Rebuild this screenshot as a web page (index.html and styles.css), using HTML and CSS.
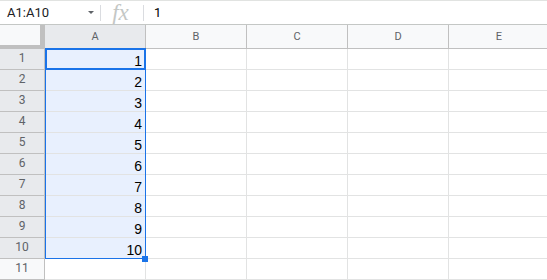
FILE: index.html
```html
<!DOCTYPE html>
<html lang="en">
<head>
<meta charset="UTF-8">
<meta name="viewport" content="width=device-width, initial-scale=1.0">
<title>Sheet</title>
<link rel="stylesheet" href="styles.css">
</head>
<body>
<div class="formula-bar">
    <div class="name-box">
        <span class="range-name">A1:A10</span>
        <span class="caret"></span>
    </div>
    <div class="fx-box"><span class="fx">fx</span></div>
    <div class="formula-input">1</div>
</div>

<div class="sheet">
    <div class="grid">
        <div class="corner"></div>
        <div class="col-head selected">A</div>
        <div class="col-head">B</div>
        <div class="col-head">C</div>
        <div class="col-head">D</div>
        <div class="col-head">E</div>

        <div class="row-head selected">1</div><div class="cell in-range">1</div><div class="cell"></div><div class="cell"></div><div class="cell"></div><div class="cell"></div>
        <div class="row-head selected">2</div><div class="cell in-range">2</div><div class="cell"></div><div class="cell"></div><div class="cell"></div><div class="cell"></div>
        <div class="row-head selected">3</div><div class="cell in-range">3</div><div class="cell"></div><div class="cell"></div><div class="cell"></div><div class="cell"></div>
        <div class="row-head selected">4</div><div class="cell in-range">4</div><div class="cell"></div><div class="cell"></div><div class="cell"></div><div class="cell"></div>
        <div class="row-head selected">5</div><div class="cell in-range">5</div><div class="cell"></div><div class="cell"></div><div class="cell"></div><div class="cell"></div>
        <div class="row-head selected">6</div><div class="cell in-range">6</div><div class="cell"></div><div class="cell"></div><div class="cell"></div><div class="cell"></div>
        <div class="row-head selected">7</div><div class="cell in-range">7</div><div class="cell"></div><div class="cell"></div><div class="cell"></div><div class="cell"></div>
        <div class="row-head selected">8</div><div class="cell in-range">8</div><div class="cell"></div><div class="cell"></div><div class="cell"></div><div class="cell"></div>
        <div class="row-head selected">9</div><div class="cell in-range">9</div><div class="cell"></div><div class="cell"></div><div class="cell"></div><div class="cell"></div>
        <div class="row-head selected">10</div><div class="cell in-range">10</div><div class="cell"></div><div class="cell"></div><div class="cell"></div><div class="cell"></div>
        <div class="row-head">11</div><div class="cell"></div><div class="cell"></div><div class="cell"></div><div class="cell"></div><div class="cell"></div>
    </div>

    <div class="range-border"></div>
    <div class="active-cell"></div>
    <div class="fill-handle"></div>
</div>
</body>
</html>
```

FILE: styles.css
```css
body {
    margin: 0;
    width: 547px;
    height: 280px;
    overflow: hidden;
    background-color: #fff;
    font-family: Roboto, "Liberation Sans", Arial, sans-serif;
}

.formula-bar {
    display: flex;
    align-items: center;
    height: 23px;
    border-top: 1px solid #e1e3e1;
    border-bottom: 1px solid #c4c7c5;
    background-color: #fff;
}

.name-box {
    display: flex;
    align-items: center;
    justify-content: space-between;
    box-sizing: border-box;
    width: 101px;
    height: 16px;
    padding: 0 6px 0 7px;
    border-right: 1px solid #dadce0;
}

.range-name {
    font-size: 13px;
    color: #202124;
}

.caret {
    width: 0;
    height: 0;
    border-left: 3px solid transparent;
    border-right: 3px solid transparent;
    border-top: 3px solid #5f6368;
}

.fx-box {
    display: flex;
    align-items: center;
    justify-content: center;
    box-sizing: border-box;
    width: 43px;
    height: 16px;
    border-right: 1px solid #dadce0;
}

.fx {
    font-family: "Liberation Serif", "Times New Roman", serif;
    font-style: italic;
    font-size: 23px;
    color: #c4c7c5;
    line-height: 16px;
    padding-right: 3px;
}

.formula-input {
    padding-left: 10px;
    font-size: 13px;
    color: #000;
}

.sheet {
    position: relative;
}

.grid {
    display: grid;
    grid-template-columns: 45px repeat(5, 101px);
    grid-template-rows: 24px repeat(11, 21px);
}

.corner {
    box-sizing: border-box;
    background-color: #f8f9fa;
    border-right: 5px solid #c0c0c0;
    border-bottom: 4px solid #c0c0c0;
}

.col-head {
    display: flex;
    align-items: center;
    justify-content: center;
    box-sizing: border-box;
    background-color: #f8f9fa;
    border-right: 1px solid #c0c0c0;
    border-bottom: 1px solid #c0c0c0;
    font-size: 11px;
    color: #5f6368;
}

.row-head {
    display: flex;
    align-items: center;
    justify-content: center;
    box-sizing: border-box;
    background-color: #f8f9fa;
    border-right: 1px solid #c0c0c0;
    border-bottom: 1px solid #c0c0c0;
    font-size: 12px;
    color: #5f6368;
    padding-bottom: 2px;
}

.col-head.selected,
.row-head.selected {
    background-color: #e8eaed;
}

.cell {
    display: flex;
    align-items: flex-end;
    justify-content: flex-end;
    box-sizing: border-box;
    padding-right: 3px;
    border-right: 1px solid #e2e3e3;
    border-bottom: 1px solid #e2e3e3;
    font-family: "Liberation Sans", Arial, sans-serif;
    font-size: 14px;
    line-height: 16px;
    color: #000;
}

.cell.in-range {
    background-color: #e8f0fe;
}

.range-border {
    position: absolute;
    left: 45px;
    top: 23px;
    width: 99px;
    height: 209px;
    border: 1px solid #1a73e8;
}

.active-cell {
    position: absolute;
    left: 45px;
    top: 23px;
    width: 97px;
    height: 18px;
    border: 2px solid #1a73e8;
}

.fill-handle {
    position: absolute;
    left: 142px;
    top: 231px;
    width: 6px;
    height: 6px;
    background-color: #1a73e8;
}
```
